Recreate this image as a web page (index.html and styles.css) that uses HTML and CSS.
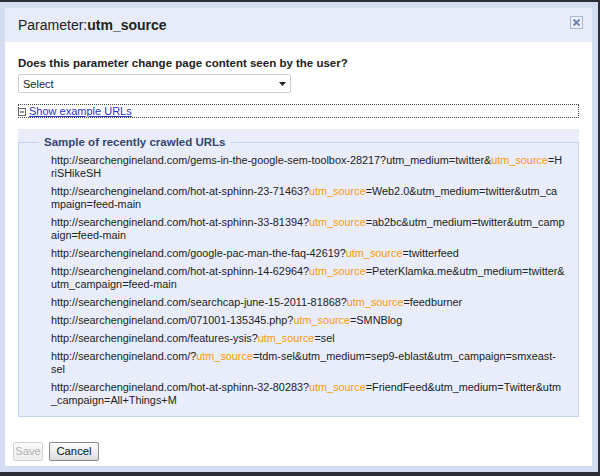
FILE: index.html
```html
<!DOCTYPE html>
<html>
<head>
<meta charset="utf-8">
<link rel="stylesheet" href="styles.css">
</head>
<body>
<div class="frame">
  <div class="dialog">
    <div class="titlebar">
      <span class="title">Parameter:<b>utm_source</b></span>
      <span class="close"><svg width="13" height="13" viewBox="0 0 13 13"><rect x="0.5" y="0.5" width="12" height="12" fill="#eef1fa" stroke="#a9b7d6"/><path d="M3.5 3.5 L9.5 9.5 M9.5 3.5 L3.5 9.5" stroke="#7083ae" stroke-width="1.8"/></svg></span>
    </div>
    <div class="body">
      <div class="question">Does this parameter change page content seen by the user?</div>
      <div class="select"><span>Select</span><svg class="arrow" width="7" height="4" viewBox="0 0 7 4"><path d="M0 0 H7 L3.5 4 Z" fill="#222"/></svg></div>
      <div class="toggle"><svg class="minus" width="8" height="8" viewBox="0 0 8 8"><rect x="0.5" y="0.5" width="7" height="7" fill="#fff" stroke="#666"/><path d="M2 4 H6" stroke="#333"/></svg><a class="link">Show example URLs</a></div>
      <div class="sample">
        <fieldset class="box">
          <legend class="legend">Sample of recently crawled URLs</legend>
          <ul class="urls">
            <li>http://searchengineland.com/gems-in-the-google-sem-toolbox-28217?utm_medium=twitter&amp;<span class="hl">utm_source</span>=H<br>riSHikeSH</li>
            <li>http://searchengineland.com/hot-at-sphinn-23-71463?<span class="hl">utm_source</span>=Web2.0&amp;utm_medium=twitter&amp;utm_ca<br>mpaign=feed-main</li>
            <li>http://searchengineland.com/hot-at-sphinn-33-81394?<span class="hl">utm_source</span>=ab2bc&amp;utm_medium=twitter&amp;utm_camp<br>aign=feed-main</li>
            <li>http://searchengineland.com/google-pac-man-the-faq-42619?<span class="hl">utm_source</span>=twitterfeed</li>
            <li>http://searchengineland.com/hot-at-sphinn-14-62964?<span class="hl">utm_source</span>=PeterKlamka.me&amp;utm_medium=twitter&amp;<br>utm_campaign=feed-main</li>
            <li>http://searchengineland.com/searchcap-june-15-2011-81868?<span class="hl">utm_source</span>=feedburner</li>
            <li>http://searchengineland.com/071001-135345.php?<span class="hl">utm_source</span>=SMNBlog</li>
            <li>http://searchengineland.com/features-ysis?<span class="hl">utm_source</span>=sel</li>
            <li>http://searchengineland.com/?<span class="hl">utm_source</span>=tdm-sel&amp;utm_medium=sep9-eblast&amp;utm_campaign=smxeast-<br>sel</li>
            <li>http://searchengineland.com/hot-at-sphinn-32-80283?<span class="hl">utm_source</span>=FriendFeed&amp;utm_medium=Twitter&amp;utm<br>_campaign=All+Things+M</li>
          </ul>
        </fieldset>
      </div>
      <div class="buttons">
        <button class="btn disabled">Save</button>
        <button class="btn">Cancel</button>
      </div>
    </div>
  </div>
</div>
</body>
</html>
```

FILE: styles.css
```css
html, body {
  margin: 0;
  padding: 0;
}
body {
  width: 600px;
  height: 476px;
  overflow: hidden;
  font-family: "Liberation Sans", Arial, sans-serif;
  color: #222;
}
.frame {
  box-sizing: border-box;
  width: 600px;
  height: 476px;
  background: #d4dcf1;
  border-top: 2px solid #2b2d35;
  border-right: 2px solid #2b2d35;
  border-bottom: 4px solid #2b2d35;
  padding: 6px 6px 6px 5px;
}
.dialog {
  background: #fff;
  height: 458px;
  display: flex;
  flex-direction: column;
}
.titlebar {
  background: #e8ecf9;
  height: 34px;
  display: flex;
  align-items: flex-start;
  justify-content: space-between;
  padding: 0 9px 0 13px;
}
.title {
  font-size: 14px;
  line-height: 34px;
  color: #222;
}
.title b {
  font-weight: bold;
}
.close {
  display: block;
  margin-top: 8px;
  height: 13px;
}
.close svg {
  display: block;
}
.body {
  padding: 0 13px;
  display: flex;
  flex-direction: column;
}
.question {
  margin-top: 14px;
  font-size: 11.5px;
  line-height: 14px;
  font-weight: bold;
  color: #222;
}
.select {
  margin-top: 4px;
  box-sizing: border-box;
  width: 273px;
  height: 19px;
  border: 1px solid #cfcfcf;
  border-radius: 2px;
  display: flex;
  align-items: center;
  justify-content: space-between;
  padding: 0 4px 0 4px;
  font-size: 11px;
  color: #222;
}
.arrow {
  display: block;
  margin-top: 1px;
}
.toggle {
  margin-top: 11px;
  box-sizing: border-box;
  height: 14px;
  border: 1px dotted #444;
  display: flex;
  align-items: center;
  font-size: 11px;
  line-height: 12px;
}
.minus {
  display: block;
  margin-left: -1px;
  margin-right: 3px;
  margin-top: 1px;
}
.link {
  color: #2a33c8;
  text-decoration: underline;
  cursor: pointer;
}
.sample {
  margin-top: 11px;
  background: #e9edf9;
  padding-top: 6px;
}
.box {
  margin: 0;
  padding: 0 0 4px 20px;
  border: 1px solid #c5d4f0;
  min-width: 0;
}
.legend {
  padding: 0 5px;
  font-size: 11.5px;
  line-height: 14px;
  font-weight: bold;
  color: #34466e;
}
.urls {
  list-style: none;
  margin: 0;
  padding: 5px 0 0 12px;
  font-size: 10.85px;
  line-height: 13px;
  color: #222;
}
.urls li {
  white-space: nowrap;
  margin-bottom: 5px;
}
.hl {
  color: #f99b0c;
}
.buttons {
  margin-top: 25px;
  margin-left: -5px;
  display: flex;
  gap: 6px;
}
.btn {
  box-sizing: border-box;
  height: 19px;
  padding: 0;
  font-family: "Liberation Sans", Arial, sans-serif;
  font-size: 11.3px;
  line-height: 17px;
  border: 1px solid #8a8a8a;
  border-radius: 2px;
  background: linear-gradient(#ffffff, #dcdcdc);
  color: #111;
  width: 50px;
}
.btn.disabled {
  border-color: #d0d0d0;
  background: linear-gradient(#fbfbfb, #eeeeee);
  color: #b0b0b0;
  width: 30px;
}
```
